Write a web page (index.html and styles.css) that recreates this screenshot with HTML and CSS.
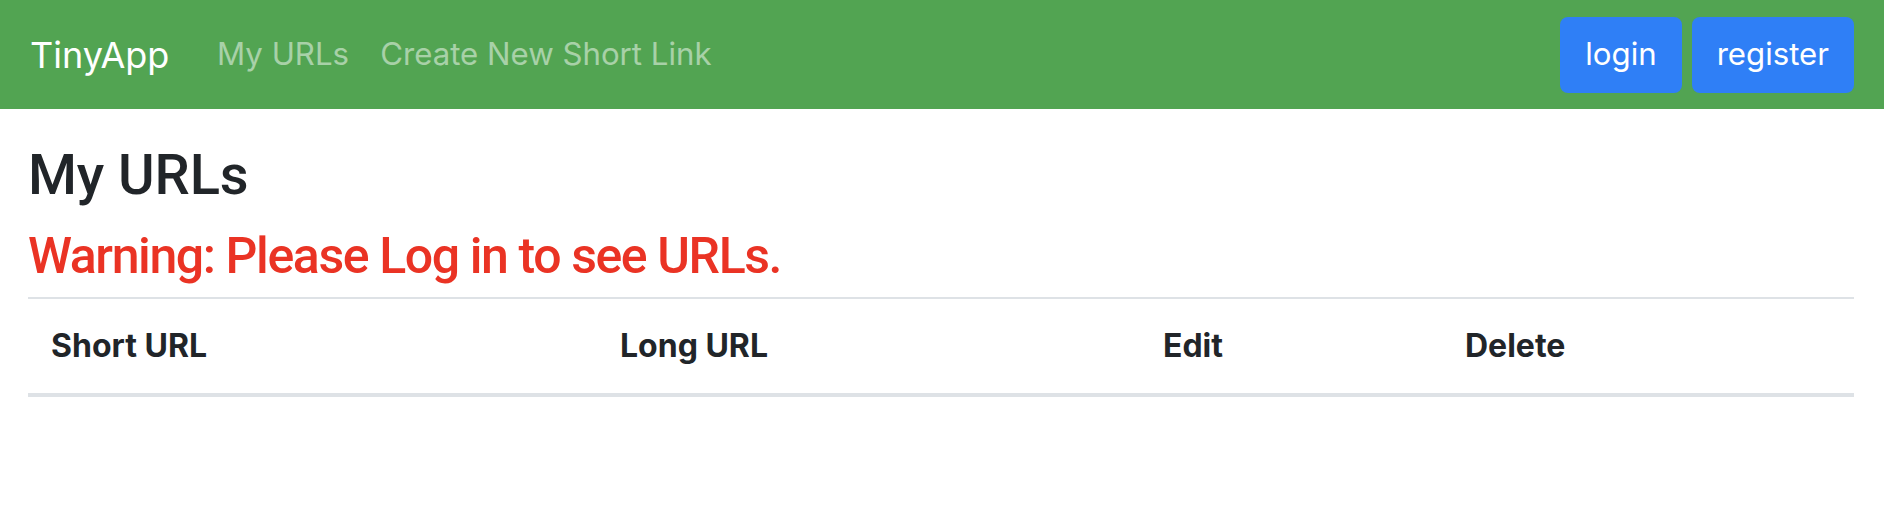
FILE: index.html
```html
<!DOCTYPE html>
<html lang="en">
<head>
<meta charset="utf-8">
<title>TinyApp</title>
<link rel="stylesheet" href="styles.css">
</head>
<body>
<nav class="navbar">
  <a class="brand" href="#">TinyApp</a>
  <div class="nav-links">
    <a class="nav-link" href="#">My URLs</a>
    <a class="nav-link" href="#">Create New Short Link</a>
  </div>
  <div class="auth">
    <a class="btn" href="#">login</a>
    <a class="btn" href="#">register</a>
  </div>
</nav>
<main class="content">
  <h2 class="title">My URLs</h2>
  <h3 class="warning">Warning: Please Log in to see URLs.</h3>
  <table class="urls">
    <colgroup>
      <col class="c-short">
      <col class="c-long">
      <col class="c-edit">
      <col class="c-del">
    </colgroup>
    <thead>
      <tr>
        <th>Short URL</th>
        <th>Long URL</th>
        <th>Edit</th>
        <th>Delete</th>
      </tr>
    </thead>
    <tbody></tbody>
  </table>
</main>
</body>
</html>
```
FILE: styles.css
```css
* { box-sizing: border-box; }
html, body { margin: 0; padding: 0; background: #fff; }
body {
  font-family: Inter, "Liberation Sans", Arial, sans-serif;
  font-size: 31.2px;
  line-height: 1.5;
  color: #212529;
}
a { text-decoration: none; }

.navbar {
  display: flex;
  align-items: center;
  height: 109px;
  padding: 0 30px 0 30px;
  background: #52a452;
}
.brand {
  font-size: 36px;
  color: #fff;
  margin-right: 32px;
  line-height: 1.5;
}
.nav-links { display: flex; flex: 1; }
.nav-link {
  color: rgba(255, 255, 255, 0.5);
  padding: 0 15.6px;
}
.auth { display: flex; gap: 10px; }
.btn {
  display: inline-flex;
  align-items: center;
  justify-content: center;
  height: 76px;
  padding: 0 25px;
  background: #2f7ff6;
  color: #fff;
  border-radius: 8px;
}

.content { padding: 0 30px 0 28px; }
.title {
  margin: 33px 0 0 0;
  font-family: Roboto, Inter, sans-serif;
  font-size: 56px;
  font-weight: 500;
  letter-spacing: -0.1px;
  line-height: 1.2;
  color: #212529;
}
.warning {
  margin: 17px 0 0 0;
  font-family: Roboto, Inter, sans-serif;
  font-size: 50px;
  font-weight: 500;
  letter-spacing: -1.4px;
  line-height: 1.2;
  color: #ea3324;
}
.urls {
  margin-top: 11px;
  width: 100%;
  border-collapse: collapse;
  table-layout: fixed;
}
.c-short { width: 569px; }
.c-long { width: 543px; }
.c-edit { width: 302px; }
.urls th {
  text-align: left;
  font-size: 32px;
  font-weight: 700;
  padding: 23px;
  border-top: 2px solid #dee2e6;
  border-bottom: 4px solid #dee2e6;
  line-height: 1.5;
}
```
